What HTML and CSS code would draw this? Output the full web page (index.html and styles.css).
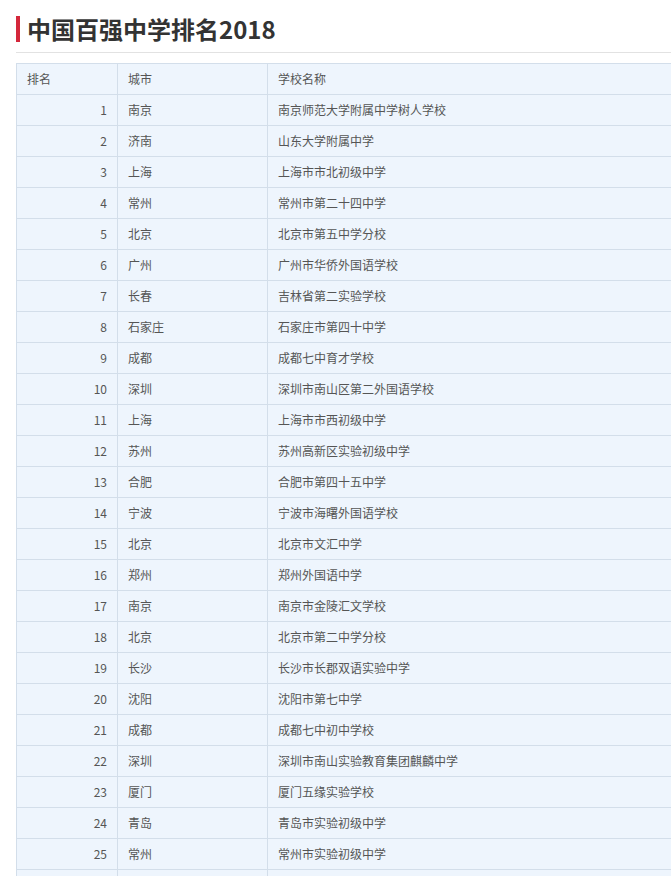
FILE: index.html
```html
<!DOCTYPE html>
<html lang="zh-CN">
<head>
<meta charset="utf-8">
<title>中国百强中学排名2018</title>
<link rel="stylesheet" href="styles.css">
</head>
<body>
<div class="page">
  <h1 class="title">中国百强中学排名2018</h1>
  <div class="rule"></div>
  <table class="rank">
    <colgroup><col class="c1"><col class="c2"><col class="c3"></colgroup>
    <thead>
      <tr><th class="num-h">排名</th><th>城市</th><th>学校名称</th></tr>
    </thead>
    <tbody>
      <tr><td class="num">1</td><td>南京</td><td>南京师范大学附属中学树人学校</td></tr>
      <tr><td class="num">2</td><td>济南</td><td>山东大学附属中学</td></tr>
      <tr><td class="num">3</td><td>上海</td><td>上海市市北初级中学</td></tr>
      <tr><td class="num">4</td><td>常州</td><td>常州市第二十四中学</td></tr>
      <tr><td class="num">5</td><td>北京</td><td>北京市第五中学分校</td></tr>
      <tr><td class="num">6</td><td>广州</td><td>广州市华侨外国语学校</td></tr>
      <tr><td class="num">7</td><td>长春</td><td>吉林省第二实验学校</td></tr>
      <tr><td class="num">8</td><td>石家庄</td><td>石家庄市第四十中学</td></tr>
      <tr><td class="num">9</td><td>成都</td><td>成都七中育才学校</td></tr>
      <tr><td class="num">10</td><td>深圳</td><td>深圳市南山区第二外国语学校</td></tr>
      <tr><td class="num">11</td><td>上海</td><td>上海市市西初级中学</td></tr>
      <tr><td class="num">12</td><td>苏州</td><td>苏州高新区实验初级中学</td></tr>
      <tr><td class="num">13</td><td>合肥</td><td>合肥市第四十五中学</td></tr>
      <tr><td class="num">14</td><td>宁波</td><td>宁波市海曙外国语学校</td></tr>
      <tr><td class="num">15</td><td>北京</td><td>北京市文汇中学</td></tr>
      <tr><td class="num">16</td><td>郑州</td><td>郑州外国语中学</td></tr>
      <tr><td class="num">17</td><td>南京</td><td>南京市金陵汇文学校</td></tr>
      <tr><td class="num">18</td><td>北京</td><td>北京市第二中学分校</td></tr>
      <tr><td class="num">19</td><td>长沙</td><td>长沙市长郡双语实验中学</td></tr>
      <tr><td class="num">20</td><td>沈阳</td><td>沈阳市第七中学</td></tr>
      <tr><td class="num">21</td><td>成都</td><td>成都七中初中学校</td></tr>
      <tr><td class="num">22</td><td>深圳</td><td>深圳市南山实验教育集团麒麟中学</td></tr>
      <tr><td class="num">23</td><td>厦门</td><td>厦门五缘实验学校</td></tr>
      <tr><td class="num">24</td><td>青岛</td><td>青岛市实验初级中学</td></tr>
      <tr><td class="num">25</td><td>常州</td><td>常州市实验初级中学</td></tr>
      <tr class="tail"><td></td><td></td><td></td></tr>
    </tbody>
  </table>
</div>
</body>
</html>
```
FILE: styles.css
```css
html, body {
  margin: 0;
  padding: 0;
  overflow: hidden;
  background: #fff;
}
body {
  font-family: "Noto Sans CJK SC", "Noto Sans", sans-serif;
  color: #555;
}
.page {
  padding: 16px 0 0 16px;
}
.title {
  margin: 0;
  padding-left: 7px;
  border-left: 4px solid #d4273b;
  font-size: 24px;
  line-height: 26px;
  font-weight: 700;
  color: #333;
  letter-spacing: 0;
}
.rule {
  margin-top: 10px;
  height: 1px;
  background: #e2e2e2;
}
.rank {
  margin-top: 10px;
  border-collapse: collapse;
  width: 760px;
  table-layout: fixed;
  background: #eef5fd;
  font-size: 12px;
}
.c1 { width: 101px; }
.c2 { width: 150px; }
.rank th, .rank td {
  height: 28px;
  padding: 0 10px 2px;
  border: 1px solid #d3deea;
  text-align: left;
  font-weight: 400;
  color: #555;
  white-space: nowrap;
  vertical-align: middle;
}
.rank td.num {
  text-align: right;
}
```
